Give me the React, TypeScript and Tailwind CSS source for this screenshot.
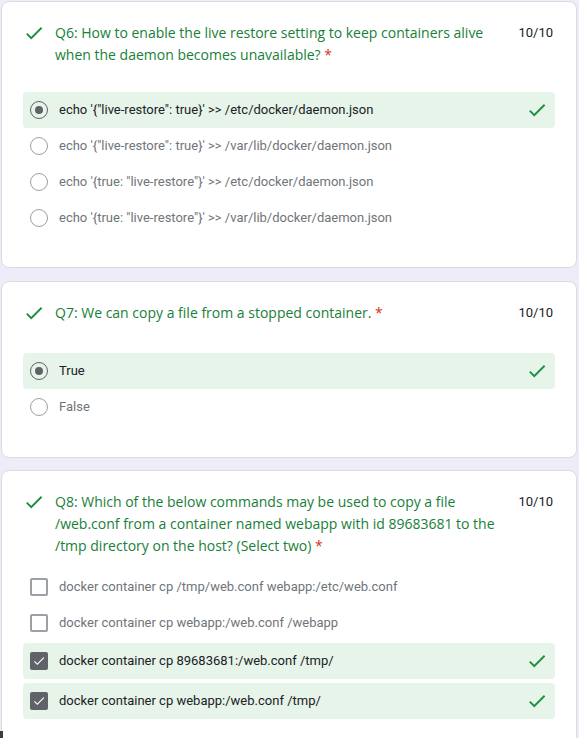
type Opt = { label: string; selected?: boolean; correct?: boolean };

const titleFont = { fontFamily: '"Open Sans", Roboto, sans-serif' };

function Check({ className = "" }: { className?: string }) {
  return (
    <svg viewBox="0 0 24 24" className={`h-[22px] w-[22px] shrink-0 fill-[#1e8e3e] ${className}`}>
      <path d="M9 16.17L4.83 12l-1.42 1.41L9 19 21 7l-1.41-1.41z" />
    </svg>
  );
}

function Radio({ on }: { on?: boolean }) {
  return (
    <span
      className={`flex h-[18px] w-[18px] shrink-0 items-center justify-center rounded-full border-[1.5px] ${
        on ? "border-[#5f6368]" : "border-[#9aa0a6]"
      }`}
    >
      {on && <span className="h-[8px] w-[8px] rounded-full bg-[#5f6368]" />}
    </span>
  );
}

function Box({ on }: { on?: boolean }) {
  if (on)
    return (
      <span className="flex h-[18px] w-[18px] shrink-0 items-center justify-center rounded-[2px] bg-[#5f6368]">
        <svg viewBox="0 0 24 24" className="h-[14px] w-[14px] fill-white">
          <path d="M9 16.17L4.83 12l-1.42 1.41L9 19 21 7l-1.41-1.41z" />
        </svg>
      </span>
    );
  return <span className="h-[18px] w-[18px] shrink-0 rounded-[2px] border-2 border-[#9aa0a6]" />;
}

function Row({ o, kind, className = "" }: { o: Opt; kind: "radio" | "box"; className?: string }) {
  return (
    <div
      className={`flex h-9 items-center rounded-[4px] pl-[7px] pr-[7px] ${
        o.selected ? "bg-[#e6f4ea]" : ""
      } ${className}`}
    >
      {kind === "radio" ? <Radio on={o.selected} /> : <Box on={o.selected} />}
      <span
        className={`ml-[11px] flex-1 text-[13px] ${o.selected ? "text-[#202124]" : "text-[#70757a]"}`}
        style={{ fontFamily: "Roboto, Arial, sans-serif" }}
      >
        {o.label}
      </span>
      {o.correct && <Check />}
    </div>
  );
}

function Header({ title }: { title: string }) {
  return (
    <div className="flex items-start pl-[21px] pr-[23px]">
      <Check />
      <p className="ml-[10px] w-[445px] text-[14px] leading-[22px] text-[#188038]" style={titleFont}>
        {title}&nbsp;<span className="text-[#d93025]">*</span>
      </p>
      <span
        className="ml-auto text-[13px] leading-[22px] text-[#202124]"
        style={{ fontFamily: "Roboto, Arial, sans-serif" }}
      >
        10/10
      </span>
    </div>
  );
}

export default function App() {
  const q6: Opt[] = [
    { label: `echo '{"live-restore": true}' >> /etc/docker/daemon.json`, selected: true, correct: true },
    { label: `echo '{"live-restore": true}' >> /var/lib/docker/daemon.json` },
    { label: `echo '{true: "live-restore"}' >> /etc/docker/daemon.json` },
    { label: `echo '{true: "live-restore"}' >> /var/lib/docker/daemon.json` },
  ];
  const q7: Opt[] = [{ label: "True", selected: true, correct: true }, { label: "False" }];
  const q8: Opt[] = [
    { label: "docker container cp /tmp/web.conf webapp:/etc/web.conf" },
    { label: "docker container cp webapp:/web.conf /webapp" },
    { label: "docker container cp 89683681:/web.conf /tmp/", selected: true, correct: true },
    { label: "docker container cp webapp:/web.conf /tmp/", selected: true, correct: true },
  ];

  return (
    <div className="relative h-[738px] overflow-hidden bg-[#f0ebf8] pl-px pr-[2px] pt-px">
      <div className="flex w-[576px] flex-col gap-[13px]">
        <div className="rounded-lg border border-[#dadce0] bg-white pb-[31px] pt-5">
          <Header title="Q6: How to enable the live restore setting to keep containers alive when the daemon becomes unavailable?" />
          <div className="mx-[21px] mt-[26px] flex flex-col">
            {q6.map((o) => (
              <Row key={o.label} o={o} kind="radio" />
            ))}
          </div>
        </div>

        <div className="rounded-lg border border-[#dadce0] bg-white pb-[32px] pt-5">
          <Header title="Q7: We can copy a file from a stopped container." />
          <div className="mx-[21px] mt-[29px] flex flex-col">
            {q7.map((o) => (
              <Row key={o.label} o={o} kind="radio" />
            ))}
          </div>
        </div>

        <div className="-mt-px rounded-lg border border-[#dadce0] bg-white pb-8 pt-5">
          <Header title="Q8: Which of the below commands may be used to copy a file /web.conf from a container named webapp with id 89683681 to the /tmp directory on the host? (Select two)" />
          <div className="mx-[21px] mt-3 flex flex-col">
            <Row o={q8[0]} kind="box" />
            <Row o={q8[1]} kind="box" />
            <Row o={q8[2]} kind="box" className="mt-0.5" />
            <Row o={q8[3]} kind="box" className="mt-1" />
          </div>
        </div>
      </div>
      <div className="absolute bottom-0 left-0 h-[7px] w-[3px] bg-[#3c3c3c]" />
    </div>
  );
}
